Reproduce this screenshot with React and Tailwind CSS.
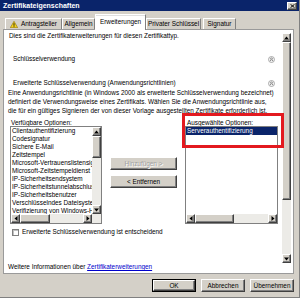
import React from "react";

const F = "font-['Liberation_Sans',Arial,sans-serif]";
const RAISED =
  "bg-[#d4d0c8] border border-t-white border-l-white border-r-[#404040] border-b-[#404040] shadow-[inset_-1px_-1px_0_#808080]";

function Tri({ dir }) {
  const vert = dir === "up" || dir === "down";
  const pts = {
    up: "0,3.5 5,3.5 2.5,0.5",
    down: "0,0.5 5,0.5 2.5,3.5",
    left: "3.5,0 3.5,5 0.5,2.5",
    right: "0.5,0 0.5,5 3.5,2.5",
  }[dir];
  return (
    <svg width={vert ? 5 : 4} height={vert ? 4 : 5} viewBox={vert ? "0 0 5 4" : "0 0 4 5"}>
      <polygon points={pts} fill="#000" />
    </svg>
  );
}

function SBtn({ dir }) {
  return (
    <div className={`w-[9px] h-[9px] shrink-0 ${RAISED} flex items-center justify-center`}>
      <Tri dir={dir} />
    </div>
  );
}

function HScroll({ thumb }) {
  return (
    <div className="h-[9px] flex flex-1">
      <SBtn dir="left" />
      <div className={`${thumb} h-[9px] shrink-0 ${RAISED}`} />
      <div className="flex-1 bg-[#ecebe7]" />
      <SBtn dir="right" />
    </div>
  );
}

function Warn() {
  return (
    <svg width="8" height="7" viewBox="0 0 8 7">
      <polygon points="4,0.3 7.7,6.7 0.3,6.7" fill="#f7d51d" stroke="#8a6d00" strokeWidth="0.6" />
      <rect x="3.6" y="2.2" width="0.8" height="2.6" fill="#000" />
      <rect x="3.6" y="5.3" width="0.8" height="0.8" fill="#000" />
    </svg>
  );
}

function Circ() {
  return (
    <svg width="7" height="7" viewBox="0 0 7 7">
      <circle cx="3.5" cy="3.5" r="3" fill="#f2f2f2" stroke="#9a9a9a" strokeWidth="0.8" />
      <polyline points="2,3.2 3.5,2 5,3.2" fill="none" stroke="#6b6b6b" strokeWidth="0.8" />
      <polyline points="2,4.8 3.5,3.6 5,4.8" fill="none" stroke="#6b6b6b" strokeWidth="0.8" />
    </svg>
  );
}

const available = [
  "Clientauthentifizierung",
  "Codesignatur",
  "Sichere E-Mail",
  "Zeitstempel",
  "Microsoft-Vertrauenslistensignatur",
  "Microsoft-Zeitstempeldienst",
  "IP-Sicherheitsendsystem",
  "IP-Sicherheitstunnelabschluss",
  "IP-Sicherheitsbenutzer",
  "Verschlüsselndes Dateisystem",
  "Verifizierung von Windows-Hardwaretreibern",
];

function Tab({ w, children, active }) {
  if (active) {
    return (
      <div
        className={`${w} h-[16px] -mb-[1px] bg-white border border-b-0 border-t-white border-l-white border-r-[#808080] shadow-[inset_0_1px_0_#e0e0e0] flex items-center justify-center relative z-10 pb-[1px]`}
      >
        {children}
      </div>
    );
  }
  return (
    <div
      className={`${w} h-[11px] bg-[#d4d0c8] border border-b-0 border-t-white border-l-white border-r-[#808080] flex items-center justify-center gap-[3px]`}
    >
      {children}
    </div>
  );
}

function Btn({ w, children, disabled }) {
  return (
    <div className={`${w} h-[13px] ${RAISED} flex items-center justify-center`}>
      <span className={disabled ? "text-[#a0a0a0] [text-shadow:1px_1px_0_#fff]" : ""}>{children}</span>
    </div>
  );
}

export default function App() {
  return (
    <div
      className={`${F} w-[300px] h-[298px] bg-[#d4d0c8] flex flex-col text-[6.4px] leading-[8px] text-black overflow-hidden border-r border-b border-[#808080]`}
    >
      {/* Title bar */}
      <div className="h-[11px] bg-[#0a246a] flex items-center justify-between pl-[3px] pr-[2px] shrink-0">
        <span className="text-white font-bold text-[7px] leading-[11px]">Zertifikateigenschaften</span>
        <div className={`w-[10px] h-[8px] ${RAISED} flex items-center justify-center`}>
          <svg width="5" height="4" viewBox="0 0 5 4">
            <path d="M0.5 0.3 L4.5 3.7 M4.5 0.3 L0.5 3.7" stroke="#000" strokeWidth="1" />
          </svg>
        </div>
      </div>

      {/* Tabs */}
      <div className="h-[18px] flex items-end pl-[5px] shrink-0 relative z-10">
        <Tab w="w-[57px]">
          <Warn />
          <span>Antragsteller</span>
        </Tab>
        <Tab w="w-[33px]">Allgemein</Tab>
        <Tab w="w-[51px]" active>
          Erweiterungen
        </Tab>
        <Tab w="w-[55px]">Privater Schlüssel</Tab>
        <div className="w-[2px]" />
        <Tab w="w-[33px]">Signatur</Tab>
      </div>

      {/* Panel */}
      <div className="ml-[3px] w-[291px] h-[245px] shrink-0 bg-white border border-[#9a9a9a] flex flex-col">
        <div className="h-[233px] flex shrink-0">
          {/* content */}
          <div className="w-[278px] flex flex-col whitespace-nowrap">
            <div className="mt-[2px] ml-[5px] h-[8px]">
              Dies sind die Zertifikaterweiterungen für diesen Zertifikattyp.
            </div>
            <div className="mt-[15px] h-[8px] flex items-center justify-between">
              <span className="ml-[9px]">Schlüsselverwendung</span>
              <span className="mr-[7px] flex">
                <Circ />
              </span>
            </div>
            <div className="mt-[16px] h-[8px] flex items-center justify-between">
              <span className="ml-[9px]">Erweiterte Schlüsselverwendung (Anwendungsrichtlinien)</span>
              <span className="mr-[7px] flex">
                <Circ />
              </span>
            </div>
            <div className="mt-[1px] ml-[4px] leading-[9px]">
              <div>Eine Anwendungsrichtlinie (in Windows 2000 als erweiterte Schlüsselverwendung bezeichnet)</div>
              <div>definiert die Verwendungsweise eines Zertifikats. Wählen Sie die Anwendungsrichtlinie aus,</div>
              <div>die für ein gültiges Signieren der von dieser Vorlage ausgestellten Zertifikate erforderlich ist.</div>
            </div>

            {/* options */}
            <div className="mt-[5px] ml-[6px] flex">
              <div className="w-[92px] flex flex-col">
                <div className="h-[6px] leading-[6px] pl-[1px]">Verfügbare Optionen:</div>
                <div className="w-[92px] h-[98px] border border-[#808080] bg-white flex flex-col">
                  <div className="h-[87px] flex">
                    <div className="flex-1 overflow-hidden pl-[1px]">
                      {available.map((t) => (
                        <div key={t} className="h-[8px] leading-[8px]">
                          {t}
                        </div>
                      ))}
                    </div>
                    <div className="w-[9px] flex flex-col">
                      <SBtn dir="up" />
                      <div className={`h-[22px] shrink-0 ${RAISED}`} />
                      <div className="flex-1 bg-[#ecebe7]" />
                      <SBtn dir="down" />
                    </div>
                  </div>
                  <div className="h-[9px] flex">
                    <HScroll thumb="w-[30px]" />
                    <div className="w-[9px] bg-[#ecebe7]" />
                  </div>
                </div>
              </div>

              <div className="w-[83px] pl-[8px] pt-[37px] flex flex-col gap-[5px]">
                <Btn w="w-[67px]" disabled>
                  Hinzufügen &gt;
                </Btn>
                <Btn w="w-[67px]">&lt; Entfernen</Btn>
              </div>

              <div className="w-[93px] flex flex-col relative">
                <div className="h-[6px] leading-[6px] pl-[2px]">Ausgewählte Optionen:</div>
                <div className="w-[93px] h-[98px] border border-[#808080] bg-white flex flex-col">
                  <div className="h-[87px]">
                    <div className="h-[8px] leading-[8px] bg-[#0a246a] text-white pl-[1px]">
                      Serverauthentifizierung
                    </div>
                  </div>
                  <div className="h-[9px] flex">
                    <HScroll thumb="w-[39px]" />
                  </div>
                </div>
                <div className="absolute left-[-3px] top-[-7px] w-[102px] h-[35px] border-[3px] border-[#e3191f] z-20" />
              </div>
            </div>

            <div className="mt-[4px] h-[8px] flex items-center">
              <div className="ml-[8px] w-[7px] h-[7px] bg-white border border-[#808080] shadow-[inset_1px_1px_0_#c0c0c0]" />
              <span className="ml-[3px]">Erweiterte Schlüsselverwendung ist entscheidend</span>
            </div>
          </div>

          {/* outer scrollbar */}
          <div className="w-[9px] pt-[3px] flex flex-col">
            <SBtn dir="up" />
            <div className={`h-[158px] shrink-0 ${RAISED}`} />
            <div className="flex-1 bg-[#ecebe7]" />
            <SBtn dir="down" />
          </div>
        </div>
        <div className="h-[8px] pl-[4px] whitespace-nowrap">
          Weitere Informationen über <span className="text-[#0000cc] underline">Zertifikaterweiterungen</span>
        </div>
      </div>

      {/* Bottom buttons */}
      <div className="mt-[5px] h-[13px] flex justify-end gap-[5px] pr-[5px] shrink-0">
        <div className="w-[44px] h-[13px] border border-black">
          <div className={`w-full h-full ${RAISED} flex items-center justify-center`}>OK</div>
        </div>
        <Btn w="w-[44px]">Abbrechen</Btn>
        <Btn w="w-[44px]">Übernehmen</Btn>
      </div>
    </div>
  );
}
